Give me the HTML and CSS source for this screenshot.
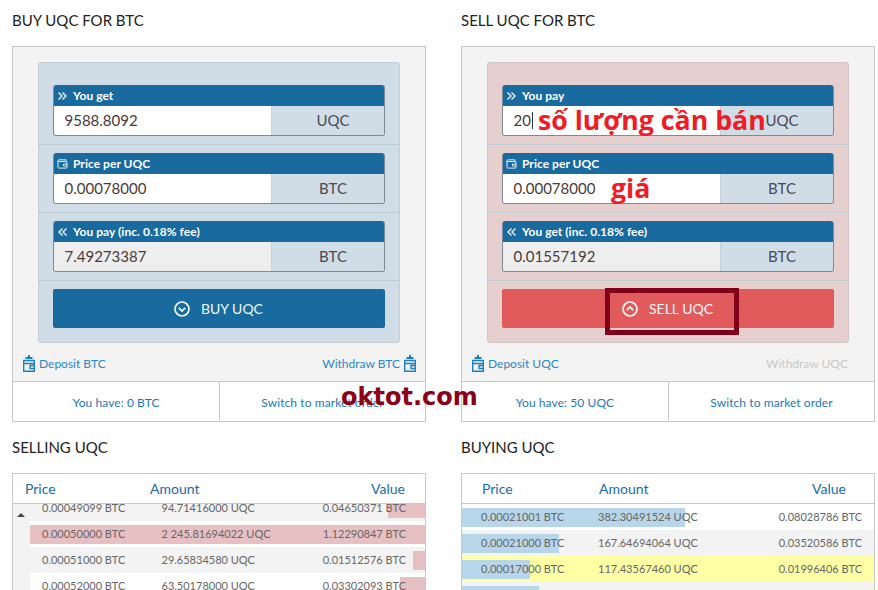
FILE: index.html
```html
<!DOCTYPE html>
<html lang="en">
<head>
<meta charset="utf-8">
<title>UQC / BTC</title>
<link rel="stylesheet" href="styles.css">
</head>
<body>
<svg class="defs" width="0" height="0" aria-hidden="true">
  <symbol id="wal" viewBox="0 0 11 10"><path d="M1 3.200V1.900C1 1.200 1.400.8 2.100.8H9v1.700M1 2.500h8.500c.3 0 .5.200.5.500v5.400c0 .4-.3.700-.7.700H1.800c-.5 0-.8-.3-.8-.8z M10 5H6.500v2H10" fill="none" stroke="currentColor" stroke-width="1"/></symbol>
  <symbol id="dep" viewBox="0 0 12 17"><path d="M5 0h2v2h2.500v2h-7V2H5z" fill="currentColor"/><path d="M.7 5.500h10.600v10.800H.7z M.7 8.500h10.600 M11.300 10.500H7v3h4.300" fill="none" stroke="currentColor" stroke-width="1.400"/></symbol>
  <symbol id="chr" viewBox="0 0 11 10"><path d="M1.500 1.500 5 5 1.500 8.500M5.500 1.500 9 5 5.500 8.500" fill="none" stroke="currentColor" stroke-width="1.500"/></symbol>
  <symbol id="chl" viewBox="0 0 11 10"><path d="M5.500 1.500 2 5 5.500 8.500M9.500 1.500 6 5 9.500 8.500" fill="none" stroke="currentColor" stroke-width="1.500"/></symbol>
</svg>
<main class="grid">
  <section class="col">
    <h2 class="title">BUY UQC FOR BTC</h2>
    <div class="panel">
      <div class="box box-buy">
        <div class="sec sec-first">
          <div class="field">
            <div class="fh"><svg class="fi"><use href="#chr"/></svg><span>You get</span></div>
            <div class="fr"><div class="val">9588.8092</div><div class="unit">UQC</div></div>
          </div>
        </div>
        <div class="sec">
          <div class="field">
            <div class="fh"><svg class="fi"><use href="#wal"/></svg><span>Price per UQC</span></div>
            <div class="fr"><div class="val">0.00078000</div><div class="unit">BTC</div></div>
          </div>
        </div>
        <div class="sec">
          <div class="field">
            <div class="fh"><svg class="fi"><use href="#chl"/></svg><span>You pay (inc. 0.18% fee)</span></div>
            <div class="fr"><div class="val val-ro">7.49273387</div><div class="unit">BTC</div></div>
          </div>
        </div>
        <div class="act">
          <div class="btn btn-buy"><svg class="bi" viewBox="0 0 16 16"><circle cx="8" cy="8" r="7" fill="none" stroke="currentColor" stroke-width="1.700"/><path d="M4.800 6.800 8 10l3.200-3.200" fill="none" stroke="currentColor" stroke-width="1.700"/></svg>BUY UQC</div>
        </div>
      </div>
      <div class="links">
        <a class="lnk"><svg class="di"><use href="#dep"/></svg>Deposit BTC</a>
        <a class="lnk">Withdraw BTC<svg class="di di-r"><use href="#dep"/></svg></a>
      </div>
      <div class="foot">
        <a class="fc">You have: 0 BTC</a>
        <a class="fc fc-r">Switch to market order</a>
      </div>
    </div>
  </section>

  <section class="col">
    <h2 class="title">SELL UQC FOR BTC</h2>
    <div class="panel">
      <div class="box box-sell">
        <div class="sec sec-first">
          <div class="field">
            <div class="fh"><svg class="fi"><use href="#chr"/></svg><span>You pay</span></div>
            <div class="fr"><div class="val">20<i class="caret"></i></div><div class="unit">UQC</div></div>
          </div>
        </div>
        <div class="sec">
          <div class="field">
            <div class="fh"><svg class="fi"><use href="#wal"/></svg><span>Price per UQC</span></div>
            <div class="fr"><div class="val">0.00078000</div><div class="unit">BTC</div></div>
          </div>
        </div>
        <div class="sec">
          <div class="field">
            <div class="fh"><svg class="fi"><use href="#chl"/></svg><span>You get (inc. 0.18% fee)</span></div>
            <div class="fr"><div class="val val-ro">0.01557192</div><div class="unit">BTC</div></div>
          </div>
        </div>
        <div class="act">
          <div class="btn btn-sell"><svg class="bi" viewBox="0 0 16 16"><circle cx="8" cy="8" r="7" fill="none" stroke="currentColor" stroke-width="1.700"/><path d="M4.800 9.200 8 6l3.200 3.200" fill="none" stroke="currentColor" stroke-width="1.700"/></svg>SELL UQC</div>
        </div>
      </div>
      <div class="links">
        <a class="lnk"><svg class="di"><use href="#dep"/></svg>Deposit UQC</a>
        <a class="lnk lnk-off">Withdraw UQC</a>
      </div>
      <div class="foot">
        <a class="fc">You have: 50 UQC</a>
        <a class="fc fc-r">Switch to market order</a>
      </div>
    </div>
  </section>

  <section class="col">
    <h2 class="title title-t">SELLING UQC</h2>
    <div class="tbl">
      <div class="th th-sell"><span>Price</span><span>Amount</span><span class="r">Value</span></div>
      <div class="tb">
        <div class="sb"><i class="sb-up"></i></div>
        <div class="rows rows-sell">
          <div class="row row-alt"><i class="bar bar-s" style="width:37px"></i><span>0.00049099 BTC</span><span>94.71416000 UQC</span><span class="r">0.04650371 BTC</span></div>
          <div class="row"><i class="bar bar-s" style="width:395px"></i><span>0.00050000 BTC</span><span>2 245.81694022 UQC</span><span class="r">1.12290847 BTC</span></div>
          <div class="row row-alt"><i class="bar bar-s" style="width:12px"></i><span>0.00051000 BTC</span><span>29.65834580 UQC</span><span class="r">0.01512576 BTC</span></div>
          <div class="row"><i class="bar bar-s" style="width:25px"></i><span>0.00052000 BTC</span><span>63.50178000 UQC</span><span class="r">0.03302093 BTC</span></div>
        </div>
      </div>
    </div>
  </section>

  <section class="col">
    <h2 class="title title-t">BUYING UQC</h2>
    <div class="tbl">
      <div class="th th-buy"><span>Price</span><span>Amount</span><span class="r">Value</span></div>
      <div class="tb">
        <div class="rows rows-buy">
          <div class="row"><i class="bar bar-b" style="width:223px"></i><span>0.00021001 BTC</span><span>382.30491524 UQC</span><span class="r">0.08028786 BTC</span></div>
          <div class="row row-alt"><i class="bar bar-b" style="width:97px"></i><span>0.00021000 BTC</span><span>167.64694064 UQC</span><span class="r">0.03520586 BTC</span></div>
          <div class="row row-hl"><i class="bar bar-b" style="width:68px"></i><span>0.00017000 BTC</span><span>117.43567460 UQC</span><span class="r">0.01996406 BTC</span></div>
          <div class="row row-alt"><i class="bar bar-b" style="width:77px"></i></div>
        </div>
      </div>
    </div>
  </section>
</main>
<div class="note note-qty">số lượng cần bán</div>
<div class="note note-price">giá</div>
<div class="mark"></div>
<div class="wm">oktot.com</div>
</body>
</html>
```
FILE: styles.css
```css
* { box-sizing: border-box; }
html, body { margin: 0; height: 590px; overflow: hidden; background: #fff; }
body { position: relative; font-family: Lato, "Noto Sans", sans-serif; color: #333; }
.defs { position: absolute; }
.grid { display: grid; grid-template-columns: 414px 414px; column-gap: 35px; padding-left: 12px; align-content: start; }
.title { margin: 0; height: 46px; padding-top: 10px; font-size: 15px; line-height: 20px; font-weight: 400; color: #222; }
.title-t { height: 51px; padding-top: 15px; }

.panel { height: 376px; border: 1px solid #c8c8c8; background: #f3f3f3; display: flex; flex-direction: column; }
.box { margin: 15px 25px 0; height: 281px; border: 1px solid #c2ccd4; border-radius: 3px; }
.box-buy { background: #d0dde6; }
.box-sell { background: #e6cfcf; border-color: #cfc6c9; }
.sec { padding: 8px 14px; border-bottom: 1px solid #c0ccd4; height: 68px; }
.sec-first { padding-top: 22px; height: 82px; }
.field { height: 51px; border-radius: 3px; overflow: hidden; border: 1px solid #7c8a96; border-top: 0; display: flex; flex-direction: column; }
.fh { height: 21px; margin: 0 -1px; background: #186a9f; color: #fff; font-size: 12px; font-weight: 700; line-height: 20px; display: flex; align-items: center; padding-left: 4px; }
.fi { width: 11px; height: 10px; margin-right: 5px; flex: none; color: #dfe9f0; }
.fh span { letter-spacing: .04px; }
.fr { flex: 1; display: flex; }
.val { width: 217px; background: #fff; padding-left: 10.500px; font-size: 15px; line-height: 29px; color: #4a3a38; display: flex; align-items: center; }
.val-ro { background: #eeeeee; }
.unit { flex: 1; background: #d0dde6; border-left: 1px solid #c5d0d8; padding-left: 10px; text-align: center; font-size: 15px; line-height: 29px; color: #4a4a55; }
.caret { width: 1px; height: 17px; margin-left: 1px; background: #333; }
.act { padding: 8px 14px 0; }
.btn { height: 39px; border-radius: 2px; color: #f4f8fb; display: flex; align-items: center; justify-content: center; font-size: 14px; font-weight: 400; padding-right: 1px; }
.btn-buy { background: #186a9f; }
.btn-sell { background: #e15b5d; }
.bi { width: 16px; height: 16px; margin-right: 11px; flex: none; }

.links { height: 38px; padding: 2px 9px 0 10px; display: flex; justify-content: space-between; align-items: center; }
.lnk { display: flex; align-items: center; font-size: 12px; color: #2c86c4; }
.lnk-off { color: #c9c9c9; margin-right: 17px; }
.di { width: 12px; height: 17px; margin-right: 4px; color: #1b7fc0; flex: none; }
.di-r { margin: 0 0 0 4px; }
.foot { flex: 1; border-top: 1px solid #c8c8c8; background: #fff; display: grid; grid-template-columns: 206px 1fr; }
.fc { display: flex; align-items: center; justify-content: center; padding-top: 1px; font-size: 12px; letter-spacing: .08px; color: #1b77b8; }
.fc-r { border-left: 1px solid #c8c8c8; }

.tbl { height: 120px; border: 1px solid #c8c8c8; border-bottom: 0; }
.th { height: 30px; border-bottom: 1px solid #c8c8c8; display: grid; font-size: 14px; line-height: 30px; color: #1b6ca8; }
.th-sell { grid-template-columns: 125px 1fr 80px; padding: 0 20px 0 12px; }
.th-buy { grid-template-columns: 117px 1fr 80px; padding: 0 28px 0 20px; }
.r { text-align: right; }
.tb { height: 90px; overflow: hidden; display: flex; }
.sb { width: 17px; flex: none; background: #f3f3f3; padding: 9px 0 0 4px; }
.sb-up { display: block; width: 0; height: 0; border: 4px solid transparent; border-top: 0; border-bottom: 4px solid #444; }
.rows { flex: 1; }
.rows-sell { margin-top: -9px; }
.row { position: relative; height: 26px; display: grid; font-size: 11px; line-height: 26px; color: #666; background: #fff; }
.row span { position: relative; white-space: nowrap; }
.rows-sell .row { grid-template-columns: 119.500px 1fr 100px; padding: 0 19px 0 12px; line-height: 25px; }
.rows-buy .row { grid-template-columns: 117px 1fr 100px; padding: 0 12px 0 19px; }
.row-alt { background: #f3f3f3; }
.row-hl { background: #ffffa6; }
.bar { position: absolute; top: 4px; bottom: 3px; }
.bar-s { right: 0; background: #e6c0c3; }
.bar-b { left: 0; background: #b8d6ea; }

.note { position: absolute; color: #ee1c25; font-family: "Open Sans", "Noto Sans", sans-serif; font-weight: 700; font-size: 26.700px; line-height: 36px; white-space: nowrap; }
.note-qty { left: 538px; top: 102px; }
.note-price { left: 611px; top: 170px; }
.mark { position: absolute; left: 605px; top: 288px; width: 134px; height: 47px; border: 5px solid #80001a; }
.wm { position: absolute; left: 341px; top: 381px; font-family: "DejaVu Sans", sans-serif; font-weight: 700; font-size: 24px; line-height: 32px; color: #8b0017; white-space: nowrap; }
```
